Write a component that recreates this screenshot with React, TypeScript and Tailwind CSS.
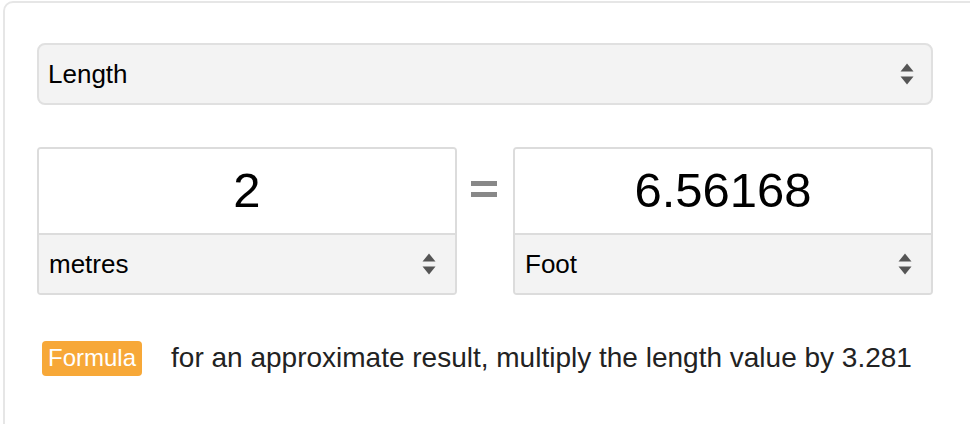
import React from 'react';

const font = { fontFamily: '"Liberation Sans", Arial, sans-serif' };

function Arrows({ className = '' }: { className?: string }) {
  return (
    <svg width="14" height="22" viewBox="0 0 14 22" className={className}>
      <path d="M7 0.5 L13.5 8.5 L0.5 8.5 Z" fill="#555" />
      <path d="M0.5 13.5 L13.5 13.5 L7 21.5 Z" fill="#555" />
    </svg>
  );
}

function UnitBox({ value, unit }: { value: string; unit: string }) {
  return (
    <div className="w-[420px] h-[148px] flex flex-col border-2 border-[#dcdcdc] rounded-[4px] overflow-hidden">
      <div className="h-[84px] flex items-center justify-center bg-white text-[49px] text-black">
        {value}
      </div>
      <div className="flex-1 flex items-center justify-between border-t-2 border-[#dcdcdc] bg-[#f3f3f3] pl-[10px] pr-[19px] text-[26px] text-black">
        <span>{unit}</span>
        <Arrows />
      </div>
    </div>
  );
}

export default function App() {
  return (
    <div className="w-[970px] h-[424px] overflow-hidden bg-white" style={font}>
      <div className="ml-[3px] mt-[1px] w-[1000px] h-[460px] border-2 border-[#e6e6e6] rounded-[10px] pl-[32px] pt-[40px]">
        {/* category select */}
        <div className="w-[896px] h-[62px] flex items-center justify-between border-2 border-[#e0e0e0] rounded-[8px] bg-[#f3f3f3] pl-[9px] pr-[17px] text-[26px] text-black">
          <span>Length</span>
          <Arrows />
        </div>

        {/* converter */}
        <div className="mt-[42px] flex items-start w-[896px]">
          <UnitBox value="2" unit="metres" />
          <div className="w-[56px] h-[84px] flex flex-col items-center justify-center gap-[6px] pr-[2px]">
            <div className="w-[26px] h-[5px] bg-[#888]" />
            <div className="w-[26px] h-[5px] bg-[#888]" />
          </div>
          <UnitBox value="6.56168" unit="Foot" />
        </div>

        {/* formula */}
        <div className="mt-[42px] flex items-center">
          <span className="ml-[5px] h-[35px] px-[6px] flex items-center rounded-[4px] bg-[#f7a838] text-white text-[24px]">
            Formula
          </span>
          <span className="ml-[29px] text-[28px] text-[#222]">
            for an approximate result, multiply the length value by 3.281
          </span>
        </div>
      </div>
    </div>
  );
}
